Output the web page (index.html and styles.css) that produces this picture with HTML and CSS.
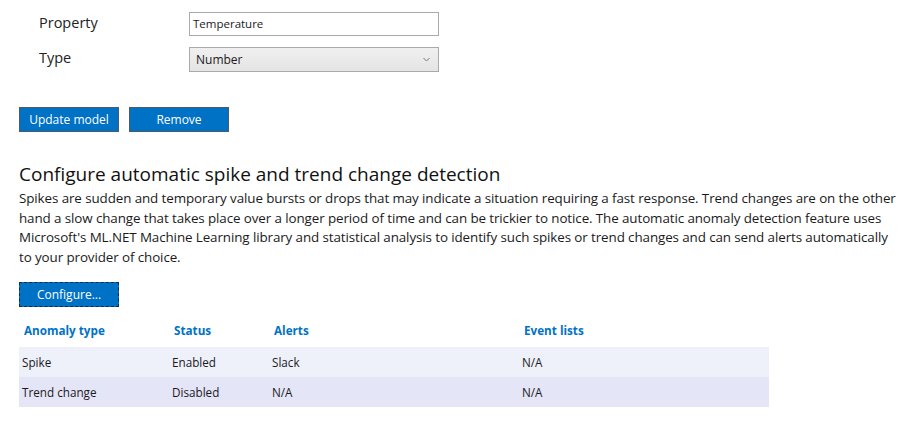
FILE: index.html
```html
<!DOCTYPE html>
<html>
<head>
<meta charset="utf-8">
<link rel="stylesheet" href="styles.css">
</head>
<body>
<div class="page">
  <div class="form">
    <div class="form-row">
      <label class="form-label">Property</label>
      <div class="text-input">Temperature</div>
    </div>
    <div class="form-row">
      <label class="form-label">Type</label>
      <div class="select-input"><span>Number</span>
        <svg class="chev" width="7" height="5" viewBox="0 0 7 5"><path d="M0.5 1 L3.5 4 L6.5 1" fill="none" stroke="#777" stroke-width="1"/></svg>
      </div>
    </div>
  </div>
  <div class="actions">
    <button class="btn">Update model</button>
    <button class="btn">Remove</button>
  </div>
  <h2 class="section-title">Configure automatic spike and trend change detection</h2>
  <p class="desc">Spikes are sudden and temporary value bursts or drops that may indicate a situation requiring a fast response. Trend changes are on the other hand a slow change that takes place over a longer period of time and can be trickier to notice. The automatic anomaly detection feature uses Microsoft's ML.NET Machine Learning library and statistical analysis to identify such spikes or trend changes and can send alerts automatically to your provider of choice.</p>
  <button class="btn btn-focus">Configure...</button>
  <table class="grid">
    <thead>
      <tr><th class="c1">Anomaly type</th><th class="c2">Status</th><th class="c3">Alerts</th><th class="c4">Event lists</th></tr>
    </thead>
    <tbody>
      <tr class="row-a"><td>Spike</td><td>Enabled</td><td>Slack</td><td>N/A</td></tr>
      <tr class="row-b"><td>Trend change</td><td>Disabled</td><td>N/A</td><td>N/A</td></tr>
    </tbody>
  </table>
</div>
</body>
</html>
```
FILE: styles.css
```css
html, body { margin: 0; padding: 0; background: #fff; }
body { font-family: "Open Sans", "Noto Sans", sans-serif; color: #1a1a1a; }
.page { padding: 12px 0 0 19px; }
.form { padding-left: 20px; display: flex; flex-direction: column; gap: 11px; }
.form-row { display: flex; align-items: center; height: 24px; }
.form-label { width: 150px; font-size: 14.5px; color: #222; padding-bottom: 3px; }
.text-input { box-sizing: border-box; width: 250px; height: 24px; border: 1px solid #aaa; font-size: 11.5px; padding: 3px 0 0 3px; background: #fff; }
.select-input { box-sizing: border-box; width: 250px; height: 25px; border: 1px solid #aaa; font-size: 12px; padding: 0 8px 0 6px; background: linear-gradient(#f0f0f0, #e4e4e4); display: flex; align-items: center; justify-content: space-between; }
.actions { display: flex; gap: 10px; margin-top: 36px; }
.btn { box-sizing: border-box; width: 100px; height: 25px; background: #0072c6; color: #fff; border: 1px solid #4d5b69; font-family: inherit; font-size: 12px; padding: 0; }
.btn-focus { border: 1px dashed #1a2a3a; display: block; margin-top: 15px; }
.section-title { font-weight: normal; font-size: 19px; margin: 29px 0 0 0; color: #111; line-height: 26px; }
.desc { font-size: 13.4px; letter-spacing: -0.1px; line-height: 19.6px; margin: 2px 0 0 0; max-width: 882px; color: #1a1a1a; }
.grid { border-collapse: collapse; margin-top: 5px; width: 750px; font-size: 11.7px; }
.grid th { text-align: left; color: #0072c6; font-weight: bold; height: 35px; padding: 0 0 0 5px; }
.grid td { height: 30px; padding: 0 0 0 3px; }
.c1 { width: 145px; } .c2 { width: 95px; } .c3 { width: 245px; } .c4 { width: 245px; }
.row-a { background: #eef1fa; }
.row-b { background: #e5e5f8; }
```
